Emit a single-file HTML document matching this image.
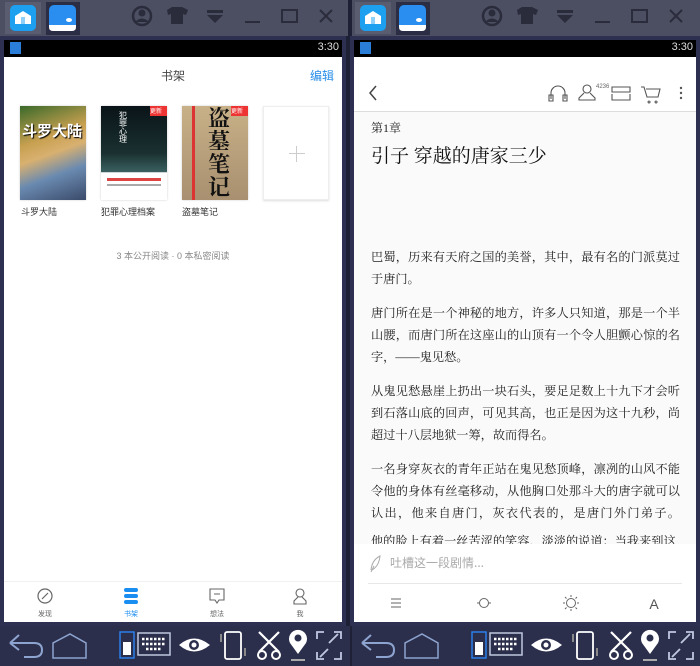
<!DOCTYPE html>
<html><head><meta charset="utf-8"><style>
*{margin:0;padding:0;box-sizing:border-box}
body{width:700px;height:666px;background:#1e2136;position:relative;overflow:hidden;font-family:"Liberation Sans","Noto Sans CJK SC",sans-serif}
.top{position:absolute;top:0;height:36px;width:350px;background:#4c4e62}
.abs{position:absolute}
.screen{position:absolute;top:36px;width:346px;height:590px;background:#2d3050}
.status{position:absolute;left:4px;top:4px;width:338px;height:17px;background:#000;color:#ddd;font-size:11px}
.content{position:absolute;left:4px;top:21px;width:338px;height:565px;background:#fff;overflow:hidden}
.bot{position:absolute;top:626px;height:40px;width:350px;background:#2b2f4b}
.line{text-align:justify;text-align-last:justify;white-space:nowrap;height:22px}
.para .line:last-child{text-align-last:left}
.ser{font-family:"Liberation Serif","Noto Serif CJK SC",serif}
</style></head><body>

<div class="top" style="left:0"></div>
<div class="top" style="left:350px"></div>
<div class="abs" style="left:348px;top:0;width:4px;height:666px;background:#1e2136"></div>

<svg class="abs" style="left:0;top:0" width="700" height="36">
 <g id="tb">
  <rect x="5" y="2" width="36" height="32" fill="#5a5c70"/>
  <rect x="10" y="5" width="26" height="26" rx="5" fill="#1da0f0"/>
  <path d="M15 24 V16 L23 11 L31 16 V24Z" fill="#fff"/><rect x="21" y="17" width="4" height="7" fill="#8fd0f8"/>
  <rect x="46" y="2" width="34" height="33" fill="#2b2d44"/>
  <rect x="49" y="5" width="27" height="26" rx="5" fill="#2a8ef0"/>
  <path d="M49 25 H76 V27 Q76 31 72 31 H53 Q49 31 49 27Z" fill="#fff"/>
  <ellipse cx="69" cy="20" rx="3" ry="2" fill="#fff"/>
  <circle cx="142" cy="16" r="9" fill="none" stroke="#2a2c3c" stroke-width="2.5"/><circle cx="142" cy="13" r="3.5" fill="#2a2c3c"/><path d="M135 22 Q142 15 149 22" fill="#2a2c3c"/>
  <path d="M167 10 L172 7 H182 L188 10 L186 15 L183 14 V24 H171 V14 L168 15Z" fill="#2a2c3c"/>
  <path d="M207 10 H223 V13 H207Z M207 15 H223 L215 23Z" fill="#2a2c3c"/>
  <rect x="245" y="21" width="15" height="2" fill="#2a2c3c"/>
  <rect x="282" y="10" width="15" height="12" fill="none" stroke="#2a2c3c" stroke-width="2"/>
  <path d="M320 10 L332 22 M332 10 L320 22" stroke="#2a2c3c" stroke-width="2"/>
 </g>
 <use href="#tb" x="350"/>
</svg>

<div class="screen" style="left:0">
 <div class="status"><div class="abs" style="left:6px;top:2px;width:11px;height:12px;background:#2a7ed8"></div><span class="abs" style="right:3px;top:1px">3:30</span></div>
 <div class="content">
  <div class="abs" style="left:0;width:338px;top:10px;text-align:center;font-size:12px;color:#444">书架</div>
  <div class="abs" style="right:8px;top:10px;font-size:12px;color:#2a8ee8">编辑</div>
  <div class="abs" style="left:16px;top:49px;width:66px;height:94px;background:linear-gradient(160deg,#3a6a2a,#c8a050 35%,#d8b070 50%,#6a8ab0 70%,#3a4a6a);box-shadow:0 0 2px #ccc">
   <div class="abs" style="left:2px;top:14px;font-size:15px;font-weight:bold;color:#fff;text-shadow:1px 1px 1px #000">斗罗大陆</div></div>
  <div class="abs" style="left:97px;top:49px;width:66px;height:94px;background:linear-gradient(180deg,#0a1418,#1a3030 50%,#3a6060 70%,#fff 71%,#fff);box-shadow:0 0 2px #ccc">
   <div class="abs" style="right:0;top:0;width:17px;height:10px;background:#e33;font-size:6px;color:#fff">更新</div>
   <div class="abs" style="left:18px;top:6px;width:8px;font-size:8px;line-height:8px;color:#fff">犯罪心理</div>
   <div class="abs" style="left:6px;top:72px;width:54px;height:3px;background:#d44"></div>
   <div class="abs" style="left:6px;top:78px;width:54px;height:2px;background:#aaa"></div></div>
  <div class="abs" style="left:178px;top:49px;width:66px;height:94px;background:linear-gradient(180deg,#c8b088,#a89070);box-shadow:0 0 2px #ccc">
   <div class="abs" style="right:0;top:0;width:17px;height:10px;background:#e33;font-size:6px;color:#fff">更新</div>
   <div class="abs" style="left:10px;top:0;width:3px;height:94px;background:#d33"></div>
   <div class="abs" style="left:26px;top:0px;width:24px;font-size:22px;line-height:23px;color:#111;font-family:'Noto Serif CJK SC',serif;font-weight:bold">盗墓笔记</div></div>
  <div class="abs" style="left:259px;top:49px;width:66px;height:94px;border:1px solid #eee;box-shadow:0 1px 2px #ddd">
   <div class="abs" style="left:25px;top:46px;width:16px;height:1px;background:#ccc"></div>
   <div class="abs" style="left:32px;top:39px;width:1px;height:16px;background:#ccc"></div></div>
  <div class="abs" style="left:17px;top:148px;font-size:9px;color:#333">斗罗大陆</div>
  <div class="abs" style="left:97px;top:148px;font-size:9px;color:#333">犯罪心理档案</div>
  <div class="abs" style="left:178px;top:148px;font-size:9px;color:#333">盗墓笔记</div>
  <div class="abs" style="left:0;width:338px;top:192px;text-align:center;font-size:9px;color:#888">3 本公开阅读 · 0 本私密阅读</div>
  <div class="abs" style="left:0;top:524px;width:338px;height:1px;background:#f0f0f0"></div>
  <svg class="abs" style="left:0;top:525px" width="338" height="40">
   <circle cx="41" cy="14" r="7" fill="none" stroke="#666" stroke-width="1.2"/><path d="M44 11 L40 15 L38 17 L42 13Z" stroke="#666" stroke-width="1.2"/>
   <rect x="120" y="6" width="14" height="4" rx="2" fill="#1a8ef0"/><rect x="120" y="12" width="14" height="4" rx="2" fill="#1a8ef0"/><rect x="120" y="18" width="14" height="4" rx="2" fill="#1a8ef0"/>
   <path d="M206 7 H220 V18 H215 L213 21 L211 18 H206Z" fill="none" stroke="#666" stroke-width="1.1"/><path d="M210 12 H216" stroke="#666"/>
   <circle cx="296" cy="11" r="4" fill="none" stroke="#666" stroke-width="1.1"/><path d="M294 15 L290 19 V22 H302 V19 L298 15" fill="none" stroke="#666" stroke-width="1.1"/>
   <text x="41" y="34" font-size="7" fill="#666" text-anchor="middle" font-family="Noto Sans CJK SC">发现</text>
   <text x="127" y="34" font-size="7" fill="#1a8ef0" text-anchor="middle" font-family="Noto Sans CJK SC">书架</text>
   <text x="213" y="34" font-size="7" fill="#666" text-anchor="middle" font-family="Noto Sans CJK SC">想法</text>
   <text x="296" y="34" font-size="7" fill="#666" text-anchor="middle" font-family="Noto Sans CJK SC">我</text>
  </svg>
 </div>
</div>

<div class="screen" style="left:350px;width:350px">
 <div class="status" style="width:342px"><div class="abs" style="left:6px;top:2px;width:11px;height:12px;background:#2a7ed8"></div><span class="abs" style="right:3px;top:1px">3:30</span></div>
 <div class="content" style="width:342px;background:#fafafa">
  <div class="abs" style="left:0;top:0;width:342px;height:55px;background:#fff;border-bottom:1px solid #ddd"></div>
  <svg class="abs" style="left:0;top:25px" width="342" height="25">
   <path d="M22 4 L16 11 L22 18" fill="none" stroke="#444" stroke-width="1.5"/>
   <path d="M197 17 V11 A7 7 0 0 1 211 11 V17 M195 13 H199 V19 H195Z M213 13 H209 V19 H213Z" fill="none" stroke="#555" stroke-width="1.1"/>
   <circle cx="233" cy="7" r="4" fill="none" stroke="#555" stroke-width="1.1"/><path d="M230 11 L225 16 V18 H241 V16 L236 11" fill="none" stroke="#555" stroke-width="1.1"/>
   <text x="242" y="6" font-size="6" fill="#666">4236</text>
   <path d="M258 5 H276 V10 H258Z M258 12 V18 H276 V12" fill="none" stroke="#555" stroke-width="1.1"/>
   <path d="M287 5 H290 L293 15 H304 L306 7 H292 M295 19 A1 1 0 1 0 295.1 19 M302 19 A1 1 0 1 0 302.1 19" fill="none" stroke="#555" stroke-width="1.1"/>
   <circle cx="327" cy="6" r="1.2" fill="#555"/><circle cx="327" cy="11" r="1.2" fill="#555"/><circle cx="327" cy="16" r="1.2" fill="#555"/>
  </svg>
  <div class="abs ser" style="left:17px;top:62px;font-size:12px;color:#222">第1章</div>
  <div class="abs ser" style="left:17px;top:84px;font-size:19px;color:#111">引子 穿越的唐家三少</div>
  <div class="abs ser" style="left:17px;top:189px;width:309px;font-size:12.2px;color:#222;line-height:22px">
   <div class="para"><div class="line">巴蜀，历来有天府之国的美誉，其中，最有名的门派莫过</div><div class="line">于唐门。</div></div>
   <div class="para" style="margin-top:12px"><div class="line">唐门所在是一个神秘的地方，许多人只知道，那是一个半</div><div class="line">山腰，而唐门所在这座山的山顶有一个令人胆颤心惊的名</div><div class="line">字，——鬼见愁。</div></div>
   <div class="para" style="margin-top:12px"><div class="line">从鬼见愁悬崖上扔出一块石头，要足足数上十九下才会听</div><div class="line">到石落山底的回声，可见其高，也正是因为这十九秒，尚</div><div class="line">超过十八层地狱一筹，故而得名。</div></div>
   <div class="para" style="margin-top:12px"><div class="line">一名身穿灰衣的青年正站在鬼见愁顶峰，凛冽的山风不能</div><div class="line">令他的身体有丝毫移动，从他胸口处那斗大的唐字就可以</div><div class="line">认出，他来自唐门，灰衣代表的，是唐门外门弟子。</div><div class="line" style="margin-top:6px">他的脸上有着一丝苦涩的笑容，淡淡的说道：当我来到这</div></div>
  </div>
  <div class="abs" style="left:0;top:487px;width:342px;height:78px;background:#fff"></div>
  <svg class="abs" style="left:0;top:487px" width="342" height="78">
   <path d="M17 26 Q18 16 26 12 Q25 22 18 26 M17 28 L20 22" fill="none" stroke="#aaa" stroke-width="1"/>
   <text x="36" y="23" font-size="12" fill="#aaa" font-family="Noto Sans CJK SC">吐槽这一段剧情...</text>
   <rect x="14" y="39" width="314" height="1" fill="#e8e8e8"/>
   <path d="M37 55 H47 M37 59 H47 M37 63 H47" stroke="#666" stroke-width="1.1"/>
   <circle cx="130" cy="59" r="4.5" fill="none" stroke="#666"/><path d="M123 59 H125.5 M134.5 59 H137" stroke="#666"/>
   <circle cx="217" cy="59" r="4.5" fill="none" stroke="#666"/><path d="M217 51 V53 M217 65 V67 M209 59 H211 M223 59 H225 M211 53 L212.5 54.5 M223 53 L221.5 54.5 M211 65 L212.5 63.5 M223 65 L221.5 63.5" stroke="#666"/>
   <text x="300" y="65" font-size="14" fill="#555" text-anchor="middle" font-family="Liberation Sans">A</text>
  </svg>
 </div>
</div>

<div class="bot" style="left:0"></div>
<div class="bot" style="left:352px;width:348px"></div>
<svg class="abs" style="left:0;top:626px" width="700" height="40">
 <defs>
 <g id="bb" fill="none" stroke="#8ea4d0" stroke-width="2">
  <path d="M10 17 L19 9 M10 17 L19 24 M10 17 H34 Q42 17 42 24 Q42 31 34 31 H24"/>
  <path d="M53 32 V17 L70 8 L86 17 V32Z" stroke-width="1.5"/>
  <rect x="120" y="6" width="14" height="26" stroke="#2a7ee8" stroke-width="1.5"/><rect x="123" y="16" width="8" height="13" fill="#fff" stroke="none"/>
  <rect x="138" y="7" width="32" height="22" stroke="#c0c8e0" stroke-width="1.5"/><path d="M142 13 H166 M142 18 H166 M146 23 H162" stroke="#fff" stroke-width="2.5" stroke-dasharray="2.5 1.5"/>
  <path d="M179 19 Q194 6 210 19 Q194 32 179 19Z" fill="#fff" stroke="none"/><circle cx="194" cy="19" r="5" fill="#2b2f4b" stroke="none"/><circle cx="194" cy="19" r="2.5" fill="#fff" stroke="none"/>
  <rect x="225" y="6" width="16" height="27" rx="2" stroke="#fff" stroke-width="1.8"/><path d="M221 8 V16 M245 22 V30" stroke="#888"/>
  <path d="M259 6 L279 26 M279 6 L259 26" stroke="#fff" stroke-width="2.2"/><circle cx="262" cy="29" r="4" stroke="#fff"/><circle cx="276" cy="29" r="4" stroke="#fff"/>
  <path d="M298 28 L290 17 A9 9 0 1 1 306 17Z" fill="#fff" stroke="none"/><circle cx="298" cy="12" r="3.5" fill="#2b2f4b" stroke="none"/><path d="M291 34 H305" stroke="#aaa"/>
  <path d="M317 13 V6 H324 M334 6 H341 V13 M317 26 V33 H324 M334 33 H341 V26 M329 17 L338 8 M320 31 L328 23" stroke="#c0c8e0" stroke-width="1.8"/>
 </g>
 </defs>
 <use href="#bb"/>
 <use href="#bb" x="352"/>
</svg>
</body></html>
